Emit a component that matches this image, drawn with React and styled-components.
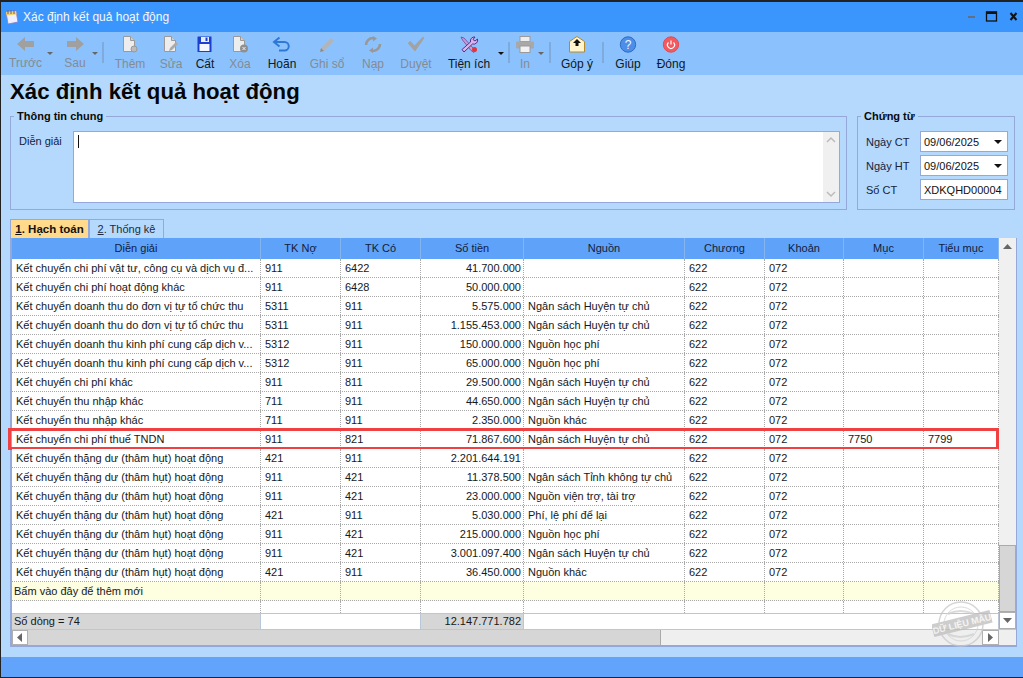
import React from 'react';
import styled, { createGlobalStyle } from 'styled-components';

const Global = createGlobalStyle`
  html, body { margin: 0; padding: 0; background: #b5d9fd; }
  * { box-sizing: border-box; }
`;
const Win = styled.div`
  width: 1023px; height: 678px; overflow: hidden; display: flex; flex-direction: column;
  border-top: 2px solid #222; border-left: 1px solid #222; border-bottom: 1px solid #222;
  background: #b5d9fd; font: 11px "Liberation Sans", Arial, sans-serif; color: #111;
`;
const TitleBar = styled.div`
  height: 30px; flex: none; background: #3a96fd; display: flex; align-items: center; padding-left: 3px; color: #f4f8ff;
`;
const TitleText = styled.span` margin-left: 4px; font-size: 12px; flex: 1; `;
const WinBtns = styled.div` display: flex; align-items: center; margin-right: 3px; `;
const Toolbar = styled.div`
  height: 43px; flex: none; background: #8bc2fe; display: flex; align-items: flex-start; padding-top: 4px;
`;
const Tool = styled.div`
  position: relative; width: ${p => p.$w}px; height: 38px; flex: none; display: flex; flex-direction: column; align-items: center;
  color: ${p => p.$off ? '#858b92' : '#101820'}; font-size: 12px;
  svg { display: block; flex: none; }
  span { margin-top: 4px; line-height: 14px; white-space: nowrap; }
`;
const Caret = styled.i`
  position: absolute; top: 16px; right: ${p => p.$r}px; width: 0; height: 0;
  border: 3px solid transparent; border-top: 3px solid ${p => p.$off ? '#666' : '#111'}; border-bottom: 0;
`;
const Sep = styled.div`
  width: 2px; height: 21px; flex: none; margin: 6px ${p => p.$r}px 0 ${p => p.$l}px; background: #7fabdc;
`;
const Heading = styled.h1`
  margin: 0; height: 34px; flex: none; padding: 3px 0 0 9px; font: bold 22.2px/28px "Liberation Sans", Arial, sans-serif; color: #050505;
`;
const TopRow = styled.div` display: flex; height: 110px; flex: none; margin: 0 0 0 9px; `;
const Group = styled.fieldset`
  margin: 0; padding: 0; height: 101px; width: ${p => p.$w}px; flex: none; margin-right: ${p => p.$mr || 0}px;
  border: 1.5px solid #94a9da; display: flex; min-inline-size: 0;
  legend { margin-left: 3px; padding: 0 3px; font-weight: bold; font-size: 11px; line-height: 14px; color: #0a0a0a; }
`;
const GeneralBody = styled.div` display: flex; width: 100%; padding: 8px 6px 6px 8px; `;
const Lbl = styled.label` color: #14233a; line-height: 20px; width: ${p => p.$w}px; flex: none; `;
const Memo = styled.div`
  flex: 1; height: 72px; background: #fff; border: 1px solid #94a9da; display: flex; justify-content: space-between;
`;
const Cursor = styled.i` width: 1px; height: 13px; background: #111; margin: 3px 0 0 4px; `;
const MemoBar = styled.div`
  width: 16px; background: #f0f0f0; display: flex; flex-direction: column; justify-content: space-between; align-items: center; padding: 4px 0;
`;
const VoucherBody = styled.div` display: flex; flex-direction: column; gap: 3px; width: 100%; padding: 8px 0 0 8px; `;
const VRow = styled.div` display: flex; align-items: center; height: 21px; `;
const Field = styled.div`
  width: 88px; height: 21px; background: #fff; border: 1px solid #94a9da; display: flex; align-items: center; justify-content: space-between;
  padding: 0 5px 0 3px; color: #111; white-space: nowrap; overflow: hidden;
`;
const DropTri = styled.i` width: 0; height: 0; border: 4px solid transparent; border-top: 4px solid #111; border-bottom: 0; `;
const Tabs = styled.div` display: flex; height: 19px; flex: none; margin: 0 0 0 9px; `;
const Tab = styled.div`
  height: 19px; width: ${p => p.$w}px; display: flex; align-items: center; justify-content: center;
  font-size: ${p => p.$on ? '11.5px' : '11px'};
  background: ${p => p.$on ? '#ffd98c' : 'transparent'}; font-weight: ${p => p.$on ? 'bold' : 'normal'};
  border: 1px solid #94a9da; border-bottom: 0; color: ${p => p.$on ? '#111' : '#1b2a40'};
  u { text-decoration: underline; }
`;
const GridWrap = styled.div`
  position: relative; margin-left: 9px; width: 1007px; height: 409px; flex: none; background: #fff;
  border-style: solid; border-color: #94a9da; border-width: 0 1px 2px 2px; display: flex; flex-direction: column;
`;
const Main = styled.div` display: flex; height: 391px; flex: none; `;
const Table = styled.div` width: 987px; flex: none; display: flex; flex-direction: column; `;
const Rows = styled.div` height: 375px; flex: none; display: flex; flex-direction: column; overflow: visible; `;
const cols = '249px 80px 80px 103px 161px 80px 79px 80px 75px';
const Row = styled.div`
  position: relative; display: grid; grid-template-columns: ${cols}; height: ${p => p.$h || 19}px; flex: none;
  background: ${p => p.$add ? '#fefee0' : '#fff'};
  border-bottom: ${p => p.$last ? '0' : '1px dotted #a8a8a8'};
`;
const Cell = styled.div`
  padding: 0 ${p => p.$right ? '2px' : '4px'} 0 ${p => p.$pl ?? 4}px; line-height: 18px; white-space: nowrap; overflow: hidden;
  text-align: ${p => p.$right ? 'right' : 'left'}; color: #15181c;
  border-right: 1px dotted #a8a8a8;
`;
const Header = styled.div`
  display: grid; grid-template-columns: ${cols}; height: 21px; flex: none; background: #5fa2fa;
`;
const HCell = styled.div`
  text-align: center; line-height: 21px; color: #12203a; border-right: 1px solid #86b4ee;
`;
const Foot = styled.div`
  display: grid; grid-template-columns: 249px 160px 103px 1fr; height: 16px; flex: none; border-top: 1px solid #b9c7d8; line-height: 15px;
`;
const FootCell = styled.div`
  background: ${p => p.$g ? '#d6d6d6' : '#fff'}; padding: 0 2px 0 ${p => p.$right ? 0 : 2}px; text-align: ${p => p.$right ? 'right' : 'left'}; color: #15181c;
  border-right: 1px solid #b9c7d8;
`;
const VBar = styled.div` width: 17px; flex: none; background: #f0f0f0; display: flex; flex-direction: column; `;
const BarBtn = styled.div`
  width: ${p => p.$w || 17}px; height: ${p => p.$h || 16}px; flex: none; background: ${p => p.$plain ? 'transparent' : '#fff'}; display: flex; align-items: center; justify-content: center;
  border: ${p => p.$plain ? '0' : '1px solid #b0b0b0'};
`;
const VSpace = styled.div` flex: 1; `;
const VThumb = styled.div` height: 67px; flex: none; background: #d6d6d6; border: 1px solid #aaa; `;
const HBar = styled.div`
  display: flex; height: 16px; flex: none; background: #efefef; border-top: 1px solid #b9c7d8;
`;
const HThumb = styled.div` width: 633px; flex: none; background: #d6d6d6; border-right: 1px solid #aaa; `;
const Corner = styled.div` width: 17px; flex: none; `;
const Red = styled.div`
  position: absolute; left: -4px; right: 0; top: -2px; bottom: -2px; border: 3px solid #ef4141; pointer-events: none;
`;
const Stamp = styled.svg` position: absolute; left: 920px; top: 362px; pointer-events: none; `;
const Gap = styled.div` flex: 1; `;
const Bottom = styled.div` height: 20px; flex: none; background: #62a4fb; `;

const G = '#a0a0a0';
const Left = () => <svg width="20" height="16" viewBox="0 0 20 16"><path d="M1 8 9 1v4h9v6H9v4z" fill={G}/></svg>;
const Right = () => <svg width="20" height="16" viewBox="0 0 20 16"><path d="M19 8 11 1v4H2v6h9v4z" fill={G}/></svg>;
const Doc = ({ children }) => <svg width="20" height="17" viewBox="0 0 20 17"><path d="M3.5.5h7l4 4v11h-11z" fill="#ededed" stroke="#9a9a9a"/><path d="M10.5.5v4h4" fill="#d0d0d0" stroke="#9a9a9a"/>{children}</svg>;
const Floppy = () => <svg width="20" height="17" viewBox="0 0 20 17"><path d="M3 .5h13.5v15.5h-14V1z" fill="#1c3fd0"/><rect x="6" y="1" width="8" height="5" fill="#e8eefc"/><rect x="10.5" y="1.5" width="2" height="3.5" fill="#1c3fd0"/><rect x="4.5" y="8" width="10" height="7" fill="#f4f6ff"/></svg>;
const Undo = () => <svg width="20" height="17" viewBox="0 0 20 17"><path d="M3 6h9.5a4 4 0 0 1 0 8.5H7" fill="none" stroke="#2f78d8" strokeWidth="2"/><path d="M7.5 1.5 2 6l5.5 4.5" fill="none" stroke="#2f78d8" strokeWidth="2"/></svg>;
const Pencil = () => <svg width="20" height="17" viewBox="0 0 20 17"><path d="M3 16l1-4L14 2l3 3L7 15z" fill="#b4b4b4"/><path d="M3 16l1-4 3 3z" fill="#8c8c8c"/></svg>;
const Reload = () => <svg width="20" height="17" viewBox="0 0 20 17" fill="none" stroke="#989898" strokeWidth="2.6"><path d="M3 9a7 7 0 0 1 7-7"/><path d="M17 8a7 7 0 0 1-7 7"/><path d="M10 0l4 2.5-4 3z" fill="#989898" stroke="none"/><path d="M10 17l-4-2.5 4-3z" fill="#989898" stroke="none"/></svg>;
const Check = () => <svg width="20" height="17" viewBox="0 0 20 17"><path d="M1.5 7l3-2 4 4.5L17 .5l1.5 1.5L9 15.5z" fill="#a2a2a2"/></svg>;
const Tools = () => <svg width="20" height="17" viewBox="0 0 20 17"><path d="M2 1l3 1 9 10 3 2-2 2.5-3-2L3.5 4z" fill="#c79ad8" stroke="#6a3a90" strokeWidth=".7"/><path d="M16 1a4 4 0 0 0-4.5 5L3 13.5 5 16l8.500-8A4 4 0 0 0 18.500 3l-2.500 2-2-1.500z" fill="#d8b4ea" stroke="#5a2f88" strokeWidth="1"/><circle cx="15.500" cy="13.500" r="2.500" fill="#e3343c"/></svg>;
const Printer = () => <svg width="20" height="17" viewBox="0 0 20 17"><rect x="5" y="0.500" width="10" height="5" fill="#eee" stroke="#9a9a9a"/><rect x="1" y="5.500" width="18" height="7" rx="1" fill="#a8a8a8"/><rect x="5" y="10" width="10" height="6.500" fill="#f2f2f2" stroke="#9a9a9a"/></svg>;
const Mail = () => <svg width="20" height="17" viewBox="0 0 20 17"><path d="M2.500 5.500 10 .5l7.500 5v10.500h-15z" fill="#fff4cc" stroke="#b48a2a"/><path d="M10 3l4 4h-2.500v3h-3V7H6z" fill="#111"/></svg>;
const Help = () => <svg width="20" height="17" viewBox="0 0 20 17"><circle cx="10" cy="8.500" r="7.700" fill="#4b8fe8" stroke="#2f6cc4"/><text x="10" y="13" textAnchor="middle" fontSize="12" fontFamily="Liberation Sans" fill="#f2f7ff">?</text></svg>;
const Power = () => <svg width="20" height="17" viewBox="0 0 20 17"><circle cx="10" cy="8.500" r="7.700" fill="#f25a60" stroke="#e04c52"/><path d="M7.500 6.500a3.500 3.500 0 1 0 5 0" fill="none" stroke="#fff" strokeWidth="1.200"/><path d="M10 4.500v4" stroke="#fff" strokeWidth="1.200"/></svg>;
const Arrow = ({ d, c = '#bbb' }) => {
  const p = { up: 'M1 6 5 2l4 4', down: 'M1 2l4 4 4-4' }[d];
  return <svg width="10" height="8" viewBox="0 0 10 8"><path d={p} fill="none" stroke={c} strokeWidth="1.500"/></svg>;
};
const Tri = ({ d }) => {
  const p = { up: 'M0 6h9L4.500 1z', down: 'M0 1h9L4.500 6z', left: 'M5 0v9L0 4.500z', right: 'M0 0v9L5 4.500z' }[d];
  const s = d === 'left' || d === 'right' ? [6, 9] : [9, 7];
  return <svg width={s[0]} height={s[1]} viewBox={`0 0 ${s[0]} ${s[1]}`}><path d={p} fill="#666"/></svg>;
};

const H = ['Diễn giải', 'TK Nợ', 'TK Có', 'Số tiền', 'Nguồn', 'Chương', 'Khoản', 'Mục', 'Tiểu mục'];
const TH = 'Kết chuyển thặng dư (thâm hụt) hoạt động';
const HT = 'Ngân sách Huyện tự chủ';
const rows = [
  ['Kết chuyển chi phí vật tư, công cụ và dịch vụ đ...', '911', '6422', '41.700.000', ''],
  ['Kết chuyển chi phí hoạt động khác', '911', '6428', '50.000.000', ''],
  ['Kết chuyển doanh thu do đơn vị tự tổ chức thu', '5311', '911', '5.575.000', HT],
  ['Kết chuyển doanh thu do đơn vị tự tổ chức thu', '5311', '911', '1.155.453.000', HT],
  ['Kết chuyển doanh thu kinh phí cung cấp dịch v...', '5312', '911', '150.000.000', 'Nguồn học phí'],
  ['Kết chuyển doanh thu kinh phí cung cấp dịch v...', '5312', '911', '65.000.000', 'Nguồn học phí'],
  ['Kết chuyển chi phí khác', '911', '811', '29.500.000', HT],
  ['Kết chuyển thu nhập khác', '711', '911', '44.650.000', HT],
  ['Kết chuyển thu nhập khác', '711', '911', '2.350.000', 'Nguồn khác'],
  ['Kết chuyển chi phí thuế TNDN', '911', '821', '71.867.600', HT, '7750', '7799'],
  [TH, '421', '911', '2.201.644.191', ''],
  [TH, '911', '421', '11.378.500', 'Ngân sách Tỉnh không tự chủ'],
  [TH, '911', '421', '23.000.000', 'Nguồn viện trợ, tài trợ'],
  [TH, '421', '911', '5.030.000', 'Phí, lệ phí để lại'],
  [TH, '911', '421', '215.000.000', 'Nguồn học phí'],
  [TH, '911', '421', '3.001.097.400', HT],
  [TH, '421', '911', '36.450.000', 'Nguồn khác'],
];
const Blank = ({ n = 8 }) => Array.from({ length: n }, (_, i) => <Cell key={i} />);

export default function App() {
  return (
    <Win>
      <Global />
      <TitleBar>
        <svg width="15" height="16" viewBox="0 0 15 16"><path d="M2 3l10-1 2 11-10 2z" fill="#eef0ff" stroke="#8a7cc0" strokeWidth=".8"/><path d="M2 3l10-1 .6 3.500-10 1z" fill="#f2d26a"/><path d="M4 1v4M7 1v4M10 1v4" stroke="#6a5a9a"/></svg>
        <TitleText>Xác định kết quả hoạt động</TitleText>
        <WinBtns>
          <svg width="52" height="14" viewBox="0 0 52 14"><rect x="0" y="6" width="7" height="2" fill="#5f6f85"/><rect x="18.500" y="2" width="10" height="9" fill="none" stroke="#111" strokeWidth="1.300"/><rect x="18" y="1.500" width="11" height="2.500" fill="#111"/><path d="M42.500 3l6 7M48.500 3l-6 7" stroke="#111" strokeWidth="2"/></svg>
        </WinBtns>
      </TitleBar>
      <Toolbar>
        <Tool $w={49} $off><Left /><span>Trước</span><Caret $r={-3} $off /></Tool>
        <Tool $w={50} $off><Right /><span>Sau</span><Caret $r={2} $off /></Tool>
        <Sep $l={2} $r={6} />
        <Tool $w={40} $off><Doc><circle cx="14" cy="13" r="3" fill="#bbb" stroke="#999"/></Doc><span>Thêm</span></Tool>
        <Tool $w={42} $off><Doc><path d="M8 15l1-3 6-6 2 2-6 6z" fill="#aaa"/></Doc><span>Sửa</span></Tool>
        <Tool $w={26}><Floppy /><span>Cất</span></Tool>
        <Tool $w={44} $off><Doc><circle cx="14" cy="12.500" r="4" fill="#8f8f8f"/><path d="M12.500 11l3 3M15.500 11l-3 3" stroke="#eee"/></Doc><span>Xóa</span></Tool>
        <Tool $w={40}><Undo /><span>Hoãn</span></Tool>
        <Tool $w={50} $off><Pencil /><span>Ghi sổ</span></Tool>
        <Tool $w={42} $off><Reload /><span>Nạp</span></Tool>
        <Tool $w={44} $off><Check /><span>Duyệt</span></Tool>
        <Tool $w={62}><Tools /><span>Tiện ích</span><Caret $r={-4} /></Tool>
        <Sep $l={8} $r={0} />
        <Tool $w={30} $off><Printer /><span>In</span></Tool>
        <Tool $w={8} $off><Caret $r={4} $off /></Tool>
        <Sep $l={1} $r={4} />
        <Tool $w={44}><Mail /><span>Góp ý</span></Tool>
        <Sep $l={3} $r={2} />
        <Tool $w={44}><Help /><span>Giúp</span></Tool>
        <Tool $w={42}><Power /><span>Đóng</span></Tool>
      </Toolbar>
      <Heading>Xác định kết quả hoạt động</Heading>
      <TopRow>
        <Group $w={837} $mr={10}>
          <legend>Thông tin chung</legend>
          <GeneralBody>
            <Lbl $w={54}>Diễn giải</Lbl>
            <Memo>
              <Cursor />
              <MemoBar><Arrow d="up" /><Arrow d="down" /></MemoBar>
            </Memo>
          </GeneralBody>
        </Group>
        <Group $w={158}>
          <legend>Chứng từ</legend>
          <VoucherBody>
            <VRow><Lbl $w={54}>Ngày CT</Lbl><Field>09/06/2025<DropTri /></Field></VRow>
            <VRow><Lbl $w={54}>Ngày HT</Lbl><Field>09/06/2025<DropTri /></Field></VRow>
            <VRow><Lbl $w={54}>Số CT</Lbl><Field>XDKQHD00004</Field></VRow>
          </VoucherBody>
        </Group>
      </TopRow>
      <Tabs>
        <Tab $w={79} $on><span><u>1</u>. Hạch toán</span></Tab>
        <Tab $w={75}><span><u>2</u>. Thống kê</span></Tab>
      </Tabs>
      <GridWrap>
        <Main>
          <Table>
            <Rows>
              <Header>{H.map(h => <HCell key={h}>{h}</HCell>)}</Header>
              {rows.map((r, i) => (
                <Row key={i}>
                  <Cell>{r[0]}</Cell>
                  <Cell>{r[1]}</Cell>
                  <Cell>{r[2]}</Cell>
                  <Cell $right>{r[3]}</Cell>
                  <Cell>{r[4]}</Cell>
                  <Cell>622</Cell>
                  <Cell>072</Cell>
                  <Cell>{r[5] || ''}</Cell>
                  <Cell>{r[6] || ''}</Cell>
                  {i === 9 && <Red />}
                </Row>
              ))}
              <Row $add><Cell $pl={2}>Bấm vào đây để thêm mới</Cell><Blank /></Row>
              <Row $h={12} $last><Blank n={9} /></Row>
            </Rows>
            <Foot>
              <FootCell $g>Số dòng = 74</FootCell>
              <FootCell />
              <FootCell $g $right>12.147.771.782</FootCell>
              <FootCell />
            </Foot>
          </Table>
          <VBar>
            <BarBtn $plain $h={17}><Tri d="up" /></BarBtn>
            <VSpace />
            <VThumb />
            <BarBtn $h={17}><Tri d="down" /></BarBtn>
          </VBar>
        </Main>
        <HBar>
          <BarBtn $w={16} $h={15}><Tri d="left" /></BarBtn>
          <HThumb />
          <Gap />
          <BarBtn $w={17} $h={15}><Tri d="right" /></BarBtn>
          <Corner />
        </HBar>
        <Stamp width="62" height="48" viewBox="0 0 62 48">
          <g opacity=".75">
            <circle cx="29" cy="24" r="22" fill="none" stroke="#c8c8c8" strokeWidth="1.500"/>
            <circle cx="29" cy="24" r="17" fill="none" stroke="#d0d0d0" strokeWidth="1"/>
            <path d="M16 14q12-6 26 0M16 34q12 6 26 0" fill="none" stroke="#cfcfcf" strokeWidth="2"/>
            <g transform="rotate(-14 30 24)">
              <rect x="0" y="17" width="60" height="13" fill="#bdbdbd"/>
              <text x="30" y="27" textAnchor="middle" fontSize="9" fontWeight="bold" fontFamily="Liberation Sans" fill="#f2f2f2">DỮ LIỆU MẪU</text>
            </g>
          </g>
        </Stamp>
      </GridWrap>
      <Gap />
      <Bottom />
    </Win>
  );
}
